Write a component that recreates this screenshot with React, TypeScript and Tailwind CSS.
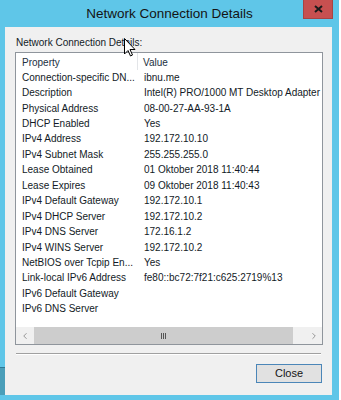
import { ChevronLeft, ChevronRight } from 'lucide-react'

type Row = { name: string; value: string }

const rows: Row[] = [
  { name: 'Connection-specific DN...', value: 'ibnu.me' },
  { name: 'Description', value: 'Intel(R) PRO/1000 MT Desktop Adapter #2' },
  { name: 'Physical Address', value: '08-00-27-AA-93-1A' },
  { name: 'DHCP Enabled', value: 'Yes' },
  { name: 'IPv4 Address', value: '192.172.10.10' },
  { name: 'IPv4 Subnet Mask', value: '255.255.255.0' },
  { name: 'Lease Obtained', value: '01 Oktober 2018 11:40:44' },
  { name: 'Lease Expires', value: '09 Oktober 2018 11:40:43' },
  { name: 'IPv4 Default Gateway', value: '192.172.10.1' },
  { name: 'IPv4 DHCP Server', value: '192.172.10.2' },
  { name: 'IPv4 DNS Server', value: '172.16.1.2' },
  { name: 'IPv4 WINS Server', value: '192.172.10.2' },
  { name: 'NetBIOS over Tcpip En...', value: 'Yes' },
  { name: 'Link-local IPv6 Address', value: 'fe80::bc72:7f21:c625:2719%13' },
  { name: 'IPv6 Default Gateway', value: '' },
  { name: 'IPv6 DNS Server', value: '' },
]

const font = { fontFamily: '"Liberation Sans", Arial, sans-serif' }

export default function App() {
  return (
    <div className="flex h-[400px] w-[341px] bg-white" style={font}>
      <div className="flex h-[400px] w-[339px] flex-col bg-[#5fc6e8]">
        {/* title bar */}
        <div className="relative flex h-[27px] shrink-0 items-center justify-center">
          <span className="pt-[2px] text-[13.5px] text-[#141414]">
            Network Connection Details
          </span>
          <div className="absolute top-0 left-[303px] flex h-[19px] w-[30px] items-center justify-center border border-t-0 border-[#a84343] bg-[#c75050]">
            <svg width="9" height="8" viewBox="0 0 9 8">
              <path d="M1 1 L8 7 M8 1 L1 7" stroke="#1a1a1a" strokeWidth="2" />
            </svg>
          </div>
        </div>

        <div className="flex flex-1">
          {/* left frame */}
          <div className="flex w-[5px] flex-col">
            <div className="h-[340px]" />
            <div className="h-[28px] border-t border-[#2f7894] bg-[#4a9eb9]" />
          </div>

          {/* client */}
          <div className="flex h-[368px] w-[327px] flex-col bg-[#f0f0f0] text-[10px] text-[#121a26]">
            <div className="pt-[10px] pl-[11px] leading-[12px]">
              Network Connection Details:
            </div>
            <div className="mt-[3px] ml-[10px] flex h-[293px] w-[308px] flex-col border border-[#8f959c] bg-white">
              {/* header */}
              <div className="flex h-[17px] shrink-0 text-[#22303f]">
                <div className="w-[122px] border-r border-[#e3e5e8] pt-[4px] pl-[6px] leading-[12px]">
                  Property
                </div>
                <div className="pt-[4px] pl-[5px] leading-[12px]">Value</div>
              </div>
              {/* rows */}
              <div className="flex flex-1 flex-col">
                {rows.map((r, i) => (
                  <div key={i} className="flex h-[15.44px] items-center leading-[12px]">
                    <div className="w-[122px] shrink-0 pl-[6px] whitespace-nowrap">{r.name}</div>
                    <div className="min-w-0 flex-1 overflow-hidden pl-[6px] whitespace-nowrap">
                      {r.value}
                    </div>
                  </div>
                ))}
              </div>
              {/* horizontal scrollbar */}
              <div className="flex h-[17px] shrink-0 bg-[#f0f0f0]">
                <div className="flex w-[17px] items-center justify-center">
                  <ChevronLeft size={10} strokeWidth={1.5} color="#606060" />
                </div>
                <div className="ml-[1px] flex w-[259px] items-center justify-center gap-[1px] bg-[#cdcdcd]">
                  <div className="h-[6px] w-[1px] bg-[#555]" />
                  <div className="h-[6px] w-[1px] bg-[#555]" />
                  <div className="h-[6px] w-[1px] bg-[#555]" />
                </div>
                <div className="w-[13px]" />
                <div className="flex w-[16px] items-center justify-center">
                  <ChevronRight size={10} strokeWidth={1.5} color="#606060" />
                </div>
              </div>
            </div>
            {/* separator */}
            <div className="mt-[8px] ml-[11px] h-[2px] w-[305px] border-t border-[#a0a0a0] border-b border-b-white" />
            {/* buttons */}
            <div className="mt-[9px] flex justify-end pr-[10px]">
              <div className="flex h-[19px] w-[66px] items-center justify-center border border-[#4b86b8] bg-[#e1e1e1] text-[11px] text-[#141414]">
                Close
              </div>
            </div>
          </div>

          {/* right frame */}
          <div className="w-[7px]" />
        </div>
        <div className="h-[5px] shrink-0" />
      </div>

      {/* mouse cursor */}
      <svg
        className="absolute top-[38px] left-[124px]"
        width="12"
        height="19"
        viewBox="0 0 12 19"
      >
        <path
          d="M0.5 0.5 L0.5 16 L4 12.5 L6.5 18 L8.5 17 L6 11.5 L11 11.5 Z"
          fill="white"
          stroke="black"
          strokeWidth="1"
        />
      </svg>
    </div>
  )
}
